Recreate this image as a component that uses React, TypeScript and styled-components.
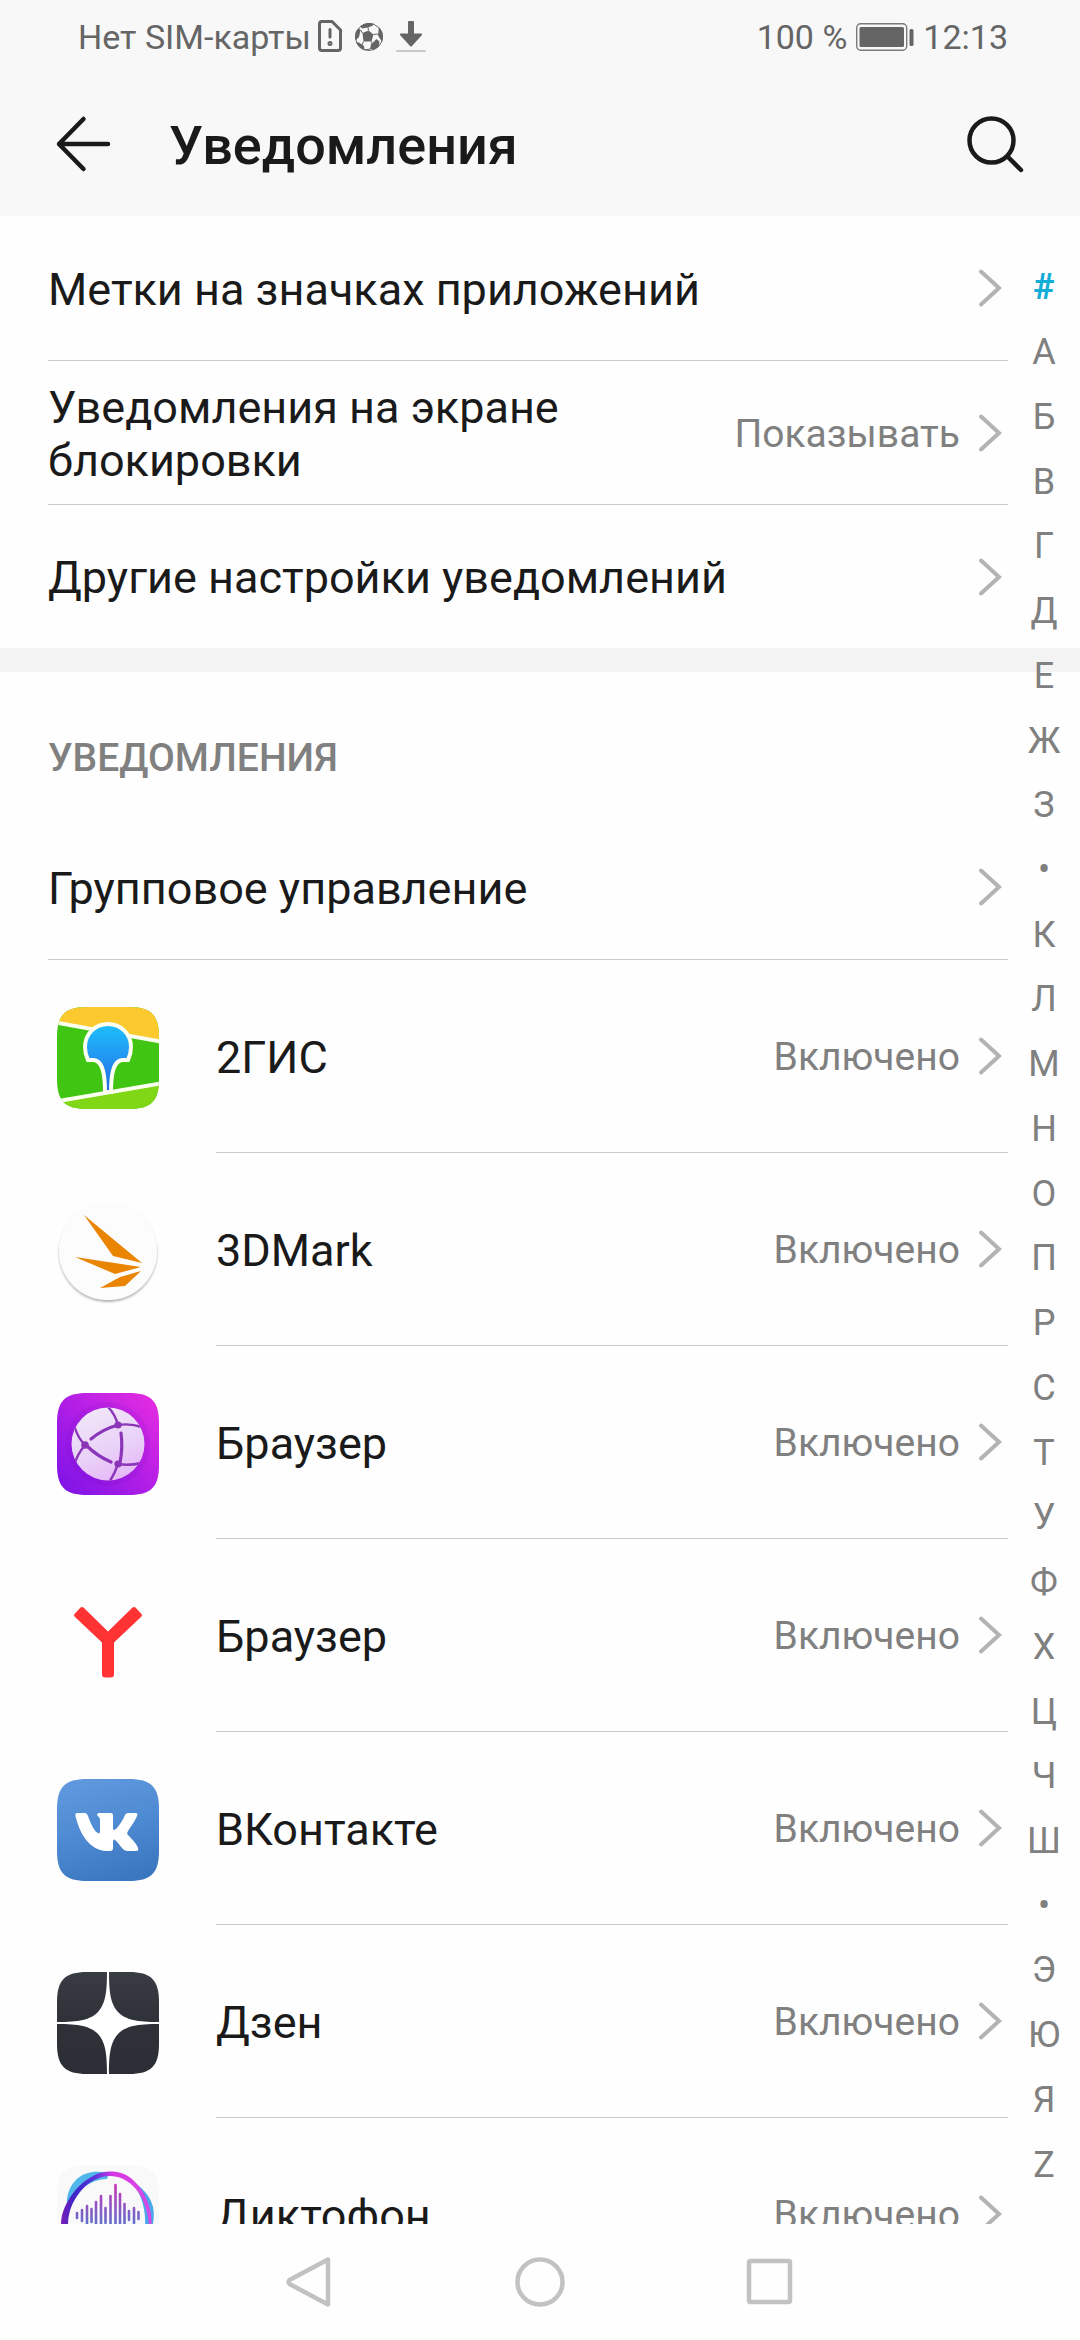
import React from 'react';
import styled, { createGlobalStyle } from 'styled-components';

const GlobalStyle = createGlobalStyle`
  *, *::before, *::after { box-sizing: border-box; }
  body {
    margin: 0;
    background: #fefefe;
    color: #1a1a1a;
    font-family: Roboto, "Noto Sans", sans-serif;
  }
  button {
    margin: 0;
    padding: 0;
    border: 0;
    background: none;
    color: inherit;
    font: inherit;
    text-align: left;
    cursor: pointer;
  }
  svg { display: block; flex: none; }
`;

const Screen = styled.div`
  display: flex;
  flex-direction: column;
  height: 100vh;
`;

const Top = styled.header`
  flex: none;
  background: #f8f8f8;
`;

const StatusBar = styled.div`
  display: flex;
  justify-content: space-between;
  height: 72px;
  padding: 2px 72px 0 78px;
  color: #656565;
  font-size: 34px;
  line-height: 40px;
`;

const StatusGroup = styled.div<{ $gap: number }>`
  display: flex;
  align-items: center;
  gap: ${(p) => p.$gap}px;
`;

const StatusIcons = styled.span`
  display: flex;
  align-items: center;
  gap: 11px;
  margin-left: 6px;
`;

const AppBar = styled.div`
  display: flex;
  align-items: center;
  height: 144px;
  padding: 0 48px;
`;

const Title = styled.h1`
  flex: 1;
  margin: 0 0 0 49px;
  padding-top: 4px;
  font-size: 54px;
  font-weight: 500;
  line-height: 64px;
`;

const IconButton = styled.button`
  display: flex;
  align-items: center;
  justify-content: center;
  width: 72px;
  height: 72px;
`;

const Content = styled.div`
  position: relative;
  flex: 1;
  min-height: 0;
`;

const ScrollArea = styled.main`
  height: 100%;
  overflow-y: auto;
  scrollbar-width: none;
`;

const List = styled.ul`
  margin: 0;
  padding: 0 72px 0 48px;
  list-style: none;
`;

const Item = styled.li`
  display: flex;

  & + & > button { border-top: 1px solid #c9c9c9; }
`;

const RowButton = styled.button`
  flex: 1;
  display: flex;
  align-items: center;
  gap: 18px;
  min-height: 144px;
  padding-right: 6px;
`;

const AppItem = styled.li`
  display: grid;
  grid-template-columns: 168px 1fr;
  align-items: center;
`;

const AppRowButton = styled(RowButton)`
  min-height: 193px;
  border-bottom: 1px solid #c9c9c9;
`;

const Label = styled.span`
  flex: 1;
  padding-top: 2px;
  font-size: 45px;
  line-height: 53px;
`;

const Value = styled.span`
  padding-top: 2px;
  color: #808080;
  font-size: 39px;
  line-height: 46px;
`;

const Band = styled.div`
  height: 24px;
  background: #f3f3f3;
`;

const SectionTitle = styled.h2`
  margin: 0;
  padding: 63px 48px 34px;
  color: #808080;
  font-size: 39px;
  font-weight: 500;
  line-height: 46px;
`;

const Divider = styled.hr`
  height: 1px;
  margin: 0 72px 0 48px;
  border: 0;
  background: #c9c9c9;
`;

const AppIcon = styled.svg`
  width: 108px;
  height: 108px;
  margin-left: 6px;
`;

const Index = styled.nav`
  position: absolute;
  top: 0;
  right: 0;
  bottom: 0;
  display: flex;
  flex-direction: column;
  width: 72px;
  padding: 39px 0 27px;
`;

const IndexLetter = styled.button<{ $active: boolean }>`
  flex: 1;
  display: flex;
  align-items: center;
  justify-content: center;
  color: ${(p) => (p.$active ? '#14add6' : '#808080')};
  font-size: 36px;
  font-weight: ${(p) => (p.$active ? 700 : 400)};
  line-height: 42px;
`;

const NavBar = styled.nav`
  flex: none;
  display: flex;
  justify-content: center;
  height: 116px;
`;

const NavButton = styled.button`
  display: flex;
  align-items: center;
  justify-content: center;
  width: 230px;
`;

const Chevron = () => (
  <svg width="24" height="40" viewBox="0 0 24 40" fill="none" stroke="#b3b3b3" strokeWidth="4" strokeLinecap="round" aria-hidden="true">
    <path d="M3 3.500L21 20L3 36.500" />
  </svg>
);

const TILE = 'M0 30C0 8 8 0 30 0H72C94 0 102 8 102 30V72C102 94 94 102 72 102H30C8 102 0 94 0 72Z';

const GisIcon = () => (
  <AppIcon viewBox="0 0 108 108" aria-hidden="true">
    <defs>
      <clipPath id="gis-clip"><path d={TILE} /></clipPath>
      <linearGradient id="gis-pin" x1="0" y1="0" x2="0" y2="1">
        <stop offset="0" stopColor="#1dc0fb" />
        <stop offset="1" stopColor="#2569e6" />
      </linearGradient>
    </defs>
    <g transform="translate(3 4)" clipPath="url(#gis-clip)">
      <rect width="102" height="102" fill="#40c512" />
      <path d="M-4 -4H106V35L-4 15Z" fill="#fcc92e" />
      <path d="M-4 96L106 76V106H-4Z" fill="#7fd715" />
      <path d="M-4 15L106 35M-4 95L106 76" stroke="#fbfff0" strokeWidth="4" />
      <path d="M51 17C38 17 28 27 28 40C28 45 29 49 31 53H36C44 53 48 62 48 85H54C54 62 58 53 66 53H71C73 49 74 45 74 40C74 27 64 17 51 17Z" fill="url(#gis-pin)" stroke="#fbfff0" strokeWidth="4" />
    </g>
  </AppIcon>
);

const MarkIcon = () => (
  <AppIcon viewBox="0 0 108 108" aria-hidden="true">
    <defs>
      <filter id="mark-shadow" x="-10%" y="-10%" width="120%" height="125%">
        <feDropShadow dx="0" dy="2" stdDeviation="1.200" floodColor="#000" floodOpacity="0.300" />
      </filter>
    </defs>
    <circle cx="54" cy="55" r="49" fill="#fcfcfc" filter="url(#mark-shadow)" />
    <g fill="#ea8502">
      <path d="M30 19L88 67L59 60Z" />
      <path d="M21 61L87 71L61 78Z" />
      <path d="M87 75L71 90L46 92L66 81Z" />
    </g>
  </AppIcon>
);

const GlobeIcon = () => (
  <AppIcon viewBox="0 0 108 108" aria-hidden="true">
    <defs>
      <linearGradient id="globe-bg" x1="0.100" y1="0.950" x2="0.950" y2="0.150">
        <stop offset="0" stopColor="#8114e6" />
        <stop offset="0.500" stopColor="#b01ee6" />
        <stop offset="1" stopColor="#de2ae2" />
      </linearGradient>
      <linearGradient id="globe-halo" x1="0" y1="1" x2="1" y2="0">
        <stop offset="0" stopColor="#7a10dc" />
        <stop offset="1" stopColor="#c824de" />
      </linearGradient>
      <linearGradient id="globe-ball" x1="0.200" y1="0" x2="0.600" y2="1">
        <stop offset="0" stopColor="#f1e8f8" />
        <stop offset="0.600" stopColor="#e9d2f8" />
        <stop offset="1" stopColor="#e6b8f6" />
      </linearGradient>
      <clipPath id="globe-clip"><circle cx="51" cy="51" r="36.500" /></clipPath>
    </defs>
    <g transform="translate(3 4)">
      <path d={TILE} fill="url(#globe-bg)" />
      <circle cx="51" cy="51" r="42" fill="url(#globe-halo)" opacity="0.600" />
      <circle cx="51" cy="51" r="36.500" fill="url(#globe-ball)" />
      <g clipPath="url(#globe-clip)" fill="none" stroke="#8b35b8" strokeLinecap="round">
        <path d="M34 46Q46 36 61 32M64 40Q66 54 63 70M30 53Q40 63 54 69" strokeWidth="3.200" />
        <path d="M61 32Q58 21 51 14M61 32Q73 30 85 34M28 52Q21 45 18 35M28 52Q20 62 18 70M61 71Q58 80 53 88M61 71Q72 73 84 70" strokeWidth="2.400" />
      </g>
      <g fill="#8b35b8">
        <circle cx="61" cy="32" r="3.600" />
        <circle cx="28" cy="52" r="3.800" />
        <circle cx="61" cy="71" r="3.600" />
      </g>
    </g>
  </AppIcon>
);

const YandexIcon = () => (
  <AppIcon viewBox="0 0 108 108" aria-hidden="true">
    <path
      d="M21 31.500L26.500 25.500Q28 24.500 29.500 25.500L54 49.500L78.500 25.500Q80 24.500 81.500 25.500L87 31.500Q89 33 87.500 34.500L60 60.500V93Q60 95 58 95.300Q54 95.800 50 95.300Q48 95 48 93V60.500L20.500 34.500Q19 33 21 31.500Z"
      fill="#ff3333"
    />
  </AppIcon>
);

const VkIcon = () => (
  <AppIcon viewBox="0 0 108 108" aria-hidden="true">
    <defs>
      <linearGradient id="vk-bg" x1="0.300" y1="0" x2="0.600" y2="1">
        <stop offset="0" stopColor="#5f98dd" />
        <stop offset="0.500" stopColor="#4e8ad2" />
        <stop offset="1" stopColor="#3b77bf" />
      </linearGradient>
    </defs>
    <g transform="translate(3 4)">
      <path d={TILE} fill="url(#vk-bg)" />
      <path
        d="M20 34H28Q30 34 31 37C34 46 38 53 41 54C42 55 43 54 43 52V41C43 38 40 37 40 35.500Q40 34 42 34H54Q56 34 56 36V49C56 52 58 51 60 49C64 44 67 39 68 36Q69 34 71 34H79Q81 34 80 37C78 42 73 49 71 52C70 54 70 55 71 56C74 59 80 65 81 69Q82 72 79 72H70Q68 72 66 70C63 67 60 62 58 61C57 60 56 61 56 63V69Q56 72 53 72C36 73 24 60 18.500 37Q18 34 20 34Z"
        fill="#fff"
      />
    </g>
  </AppIcon>
);

const ZenIcon = () => (
  <AppIcon viewBox="0 0 108 108" aria-hidden="true">
    <defs>
      <linearGradient id="zen-bg" x1="0" y1="0" x2="0" y2="1">
        <stop offset="0" stopColor="#393c42" />
        <stop offset="0.500" stopColor="#2e3138" />
        <stop offset="1" stopColor="#2c2e36" />
      </linearGradient>
    </defs>
    <g transform="translate(3 4)">
      <path d={TILE} fill="url(#zen-bg)" />
      <path d="M50 0H52C52 22 54 32 61 40C69 48 80 50 102 50V52C80 52 69 54 61 62C54 70 52 80 52 102H50C50 80 48 70 41 62C33 54 22 52 0 52V50C22 50 33 48 41 40C48 32 50 22 50 0Z" fill="#fff" />
    </g>
  </AppIcon>
);

const WAVE = [
  [20, 48, 53], [25, 45, 56], [30, 41, 60], [34.500, 44, 57], [39, 37, 64], [44, 31, 70], [48.500, 43, 58],
  [53.500, 31, 70], [58.500, 20, 80], [63, 29, 72], [67.500, 39, 62], [72, 46, 55], [77, 43, 58], [81.500, 47, 54],
];

const RecorderIcon = () => (
  <AppIcon viewBox="0 0 108 108" aria-hidden="true">
    <defs>
      <linearGradient id="rec-ring" x1="0" y1="0.500" x2="1" y2="0.500">
        <stop offset="0" stopColor="#7a1cb8" />
        <stop offset="0.150" stopColor="#3d25c8" />
        <stop offset="0.380" stopColor="#5a35dc" />
        <stop offset="0.580" stopColor="#d936e4" />
        <stop offset="1" stopColor="#d54be6" />
      </linearGradient>
      <linearGradient id="rec-wave" x1="0" y1="20" x2="0" y2="80" gradientUnits="userSpaceOnUse">
        <stop offset="0" stopColor="#c535b4" />
        <stop offset="0.600" stopColor="#6b6bcb" />
        <stop offset="1" stopColor="#4f8fd8" />
      </linearGradient>
    </defs>
    <g transform="translate(3 4)">
      <path d={TILE} fill="#f9f9fa" />
      <path d="M10 40C9 26 17 13 28 9C36 6 44 6.500 52 8L50 14C34 14 20 26 10 40Z" fill="#51b6ea" />
      <path d="M74 16C84 21 93 30 96 42C98 52 96 64 91 74L88 60C89 44 84 28 74 16Z" fill="#4aa6e8" />
      <path
        fillRule="evenodd"
        d="M4 60C4 50 7 43 11 36C17 25 26 16 37 10.500C42 7.500 48 6.500 53 6.500C60 6.500 68 8 75 14C84 22 91 33 94 49C98 76 78 97 51 97C24 97 5 82 4 60ZM11 60C14 80 28 92 51 92C76 92 94 76 91.500 56C90 42 84 28 76 21C70 15 62 11 53 11C42 11 31 17 23 27C15 37 11 48 11 60Z"
        fill="url(#rec-ring)"
      />
      <g stroke="url(#rec-wave)" strokeWidth="2.600" strokeLinecap="round">
        {WAVE.map(([x, y1, y2]) => (
          <path key={x} d={`M${x} ${y1}L${x + 0.010} ${y2}`} />
        ))}
      </g>
    </g>
  </AppIcon>
);

const SimIcon = () => (
  <svg width="26" height="34" viewBox="0 0 26 34" fill="none" stroke="#656565" strokeWidth="3" aria-hidden="true">
    <path d="M4 1.500H15L23.500 10V28Q23.500 30.500 21 30.500H5Q2.500 30.500 2.500 28V4Q2.500 1.500 5 1.500Z" strokeLinejoin="round" />
    <path d="M13 9.500V17" strokeLinecap="round" />
    <circle cx="13" cy="23.500" r="1" />
  </svg>
);

const BallIcon = () => (
  <svg width="30" height="30" viewBox="0 0 30 30" aria-hidden="true">
    <defs>
      <clipPath id="ball-clip"><circle cx="15" cy="15" r="14" /></clipPath>
    </defs>
    <circle cx="15" cy="15" r="13.500" fill="#f8f8f8" stroke="#656565" strokeWidth="1" />
    <g clipPath="url(#ball-clip)" fill="#656565">
      <path d="M8.500 11L14.500 8.500L19.500 12.500L17.500 19.500L9.500 19.500Z" />
      <path d="M6 4L13 0L21 1L18 4L14 5.500L8 6.500Z" />
      <path d="M0 9L5 6.500L6.500 8L5 15L2 18L0 17Z" />
      <path d="M25 4L30 10V20L27.500 19L24 13.500L24.500 9Z" />
      <path d="M1 20L5 20.500L10 24L10.500 28L7 29Z" />
      <path d="M17 22.500L22.500 17L25.500 19.500L24.500 25L20 27.500L16 27Z" />
    </g>
    <path d="M8.500 11L6.500 8M14.500 8.500L14 5.500M19.500 12.500L24 12M17.500 19.500L18 22M9.500 19.500L8 23M10.500 28L16 27" stroke="#656565" strokeWidth="1" />
  </svg>
);

const DownloadIcon = () => (
  <svg width="32" height="34" viewBox="0 0 32 34" aria-hidden="true">
    <path d="M13 2Q13 1 14 1H18Q19 1 19 2V13.500H26Q28 13.500 26.500 15.500L17 26Q16 27 15 26L5.500 15.500Q4 13.500 6 13.500H13Z" fill="#656565" />
    <path d="M2 31H30" stroke="#c9c9c9" strokeWidth="2" strokeLinecap="round" />
  </svg>
);

const BatteryIcon = () => (
  <svg width="60" height="30" viewBox="0 0 60 30" aria-hidden="true">
    <rect x="1.700" y="1.700" width="50" height="26.600" rx="4" fill="none" stroke="#7a7a7a" strokeWidth="1.400" />
    <rect x="4.500" y="5" width="44.500" height="20" rx="1.500" fill="#656565" />
    <rect x="54.500" y="7" width="4" height="17" rx="1.500" fill="#656565" />
  </svg>
);

const BackIcon = () => (
  <svg width="60" height="60" viewBox="0 0 60 60" fill="none" stroke="#1a1a1a" strokeWidth="4.500" strokeLinecap="round" strokeLinejoin="round" aria-hidden="true">
    <path d="M54 30H5M29.500 5L5 30L29.500 55" />
  </svg>
);

const SearchIcon = () => (
  <svg width="60" height="60" viewBox="0 0 60 60" fill="none" stroke="#1a1a1a" strokeWidth="4.500" strokeLinecap="round" aria-hidden="true">
    <circle cx="25.500" cy="26.500" r="22" />
    <path d="M41.500 42.500L55 56" />
  </svg>
);

interface Setting {
  label: string;
  value?: string;
}

const settings: Setting[] = [
  { label: 'Метки на значках приложений' },
  { label: 'Уведомления на экране блокировки', value: 'Показывать' },
  { label: 'Другие настройки уведомлений' },
];

const apps = [
  { name: '2ГИС', Icon: GisIcon },
  { name: '3DMark', Icon: MarkIcon },
  { name: 'Браузер', Icon: GlobeIcon },
  { name: 'Браузер', Icon: YandexIcon },
  { name: 'ВКонтакте', Icon: VkIcon },
  { name: 'Дзен', Icon: ZenIcon },
  { name: 'Диктофон', Icon: RecorderIcon },
];

const letters = [...'#АБВГДЕЖЗ•КЛМНОПРСТУФХЦЧШ•ЭЮЯZ'];

export default function App() {
  const [active, setActive] = React.useState(0);
  return (
    <Screen>
      <GlobalStyle />
      <Top>
        <StatusBar>
          <StatusGroup $gap={0}>
            <span>Нет SIM-карты</span>
            <StatusIcons>
              <SimIcon />
              <BallIcon />
              <DownloadIcon />
            </StatusIcons>
          </StatusGroup>
          <StatusGroup $gap={8}>
            <span>100 %</span>
            <BatteryIcon />
            <span>12:13</span>
          </StatusGroup>
        </StatusBar>
        <AppBar>
          <IconButton aria-label="Назад"><BackIcon /></IconButton>
          <Title>Уведомления</Title>
          <IconButton aria-label="Поиск"><SearchIcon /></IconButton>
        </AppBar>
      </Top>
      <Content>
        <ScrollArea>
          <List>
            {settings.map((s) => (
              <Item key={s.label}>
                <RowButton>
                  <Label>{s.label}</Label>
                  {s.value && <Value>{s.value}</Value>}
                  <Chevron />
                </RowButton>
              </Item>
            ))}
          </List>
          <Band />
          <SectionTitle>УВЕДОМЛЕНИЯ</SectionTitle>
          <List>
            <Item>
              <RowButton>
                <Label>Групповое управление</Label>
                <Chevron />
              </RowButton>
            </Item>
          </List>
          <Divider />
          <List>
            {apps.map(({ name, Icon }, i) => (
              <AppItem key={i}>
                <Icon />
                <AppRowButton>
                  <Label>{name}</Label>
                  <Value>Включено</Value>
                  <Chevron />
                </AppRowButton>
              </AppItem>
            ))}
          </List>
        </ScrollArea>
        <Index aria-label="Алфавитный указатель">
          {letters.map((l, i) => (
            <IndexLetter key={i} $active={i === active} onClick={() => setActive(i)}>
              {l}
            </IndexLetter>
          ))}
        </Index>
      </Content>
      <NavBar>
        <NavButton aria-label="Назад">
          <svg width="54" height="54" viewBox="0 0 54 54" fill="none" stroke="#c2c2c2" strokeWidth="4.500" strokeLinejoin="round" aria-hidden="true">
            <path d="M45 4.500V49.500L6.500 29Q4.500 27 6.500 25Z" />
          </svg>
        </NavButton>
        <NavButton aria-label="Домой">
          <svg width="54" height="54" viewBox="0 0 54 54" fill="none" stroke="#c2c2c2" strokeWidth="4.500" aria-hidden="true">
            <circle cx="27" cy="27" r="22.500" />
          </svg>
        </NavButton>
        <NavButton aria-label="Недавние">
          <svg width="54" height="54" viewBox="0 0 54 54" fill="none" stroke="#c2c2c2" strokeWidth="4.500" aria-hidden="true">
            <rect x="6" y="6" width="41" height="41" rx="1.500" />
          </svg>
        </NavButton>
      </NavBar>
    </Screen>
  );
}
